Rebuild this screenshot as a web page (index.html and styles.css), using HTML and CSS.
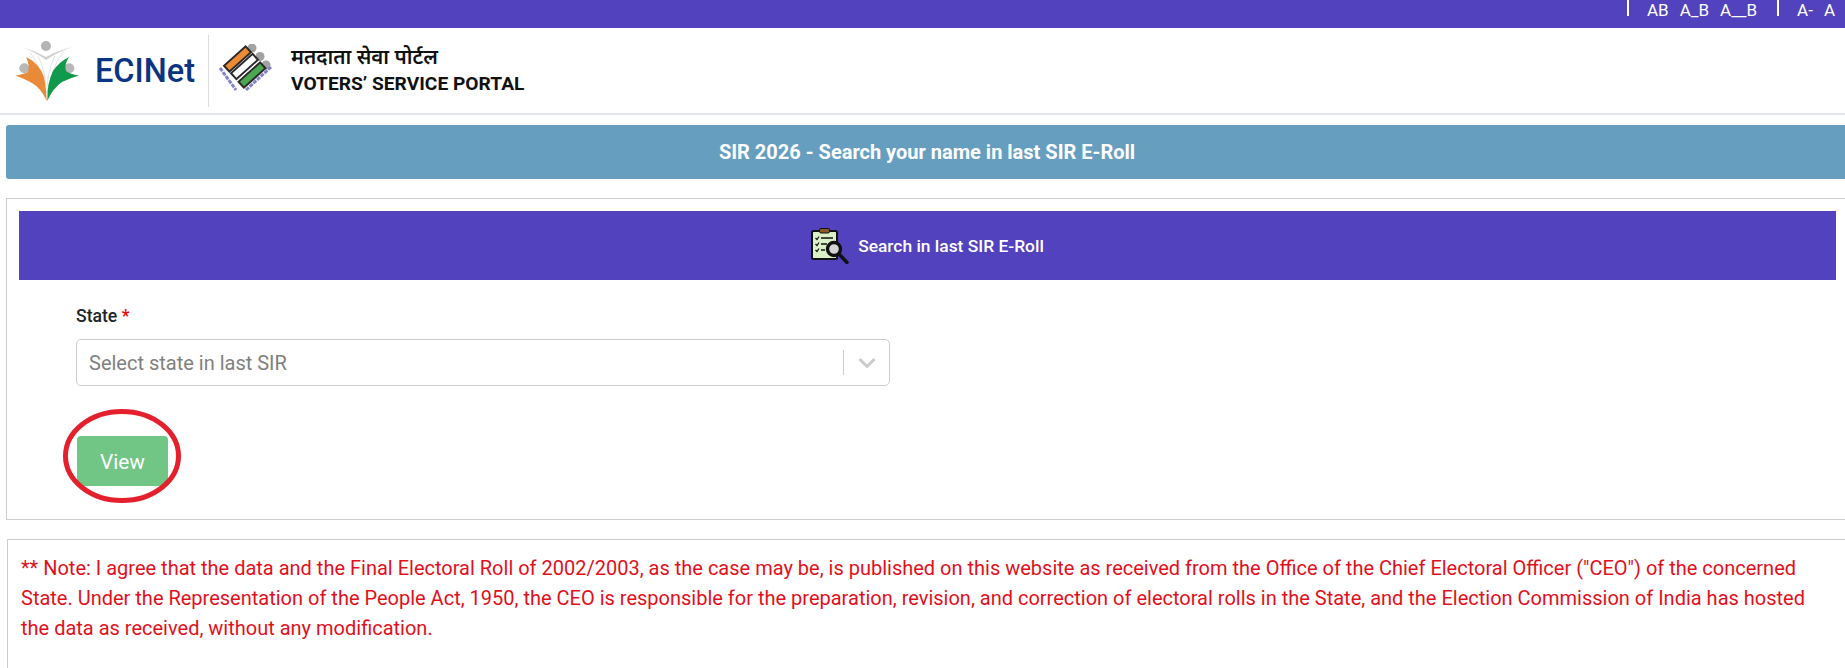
FILE: index.html
```html
<!DOCTYPE html>
<html lang="en">
<head>
<meta charset="utf-8">
<title>Voters' Service Portal</title>
<link rel="stylesheet" href="styles.css">
</head>
<body>
<div class="topbar">
  <span class="sep"></span>
  <span class="t">AB</span><span class="t t2">A_B</span><span class="t t2">A__B</span>
  <span class="sep sep2"></span>
  <span class="t">A-</span><span class="t t5">A</span>
</div>
<header class="header">
  <svg class="logo-eci" viewBox="0 0 64 60" width="64" height="60">
    <circle cx="31" cy="5" r="5" fill="#b4b4b4"/>
    <circle cx="9.300" cy="27.300" r="5" fill="#b8b8b8"/>
    <circle cx="54.300" cy="27.300" r="5" fill="#b8b8b8"/>
    <path d="M7 6 Q22 12 31 19 Q41 12 57 6 Q42 10 31 16 Q20 10 7 6Z" fill="#cfcfcf"/>
    <path d="M15 11 Q26 26 31 52 Q31 30 23 15" fill="none" stroke="#e4e4e4" stroke-width="1"/>
    <path d="M48 11 Q37 26 32 52 Q32 30 40 15" fill="none" stroke="#e4e4e4" stroke-width="1"/>
    <path d="M0.500 34.500 Q9 33 13 31 Q15 24 11 16 Q24 22 29 36 Q31 46 31.700 60 Q26 47 17 42 Q10 38 0.500 34.500Z" fill="#e88a37"/>
    <path d="M64 34.500 Q55 37 47 41 Q38 47 32.300 60 Q32 42 38 30 Q44 21 54 16 Q49 24 51 30 Q55 33 64 34.500Z" fill="#119a4b"/>
  </svg>
  <span class="eci-name">ECINet</span>
  <span class="divider"></span>
  <svg class="logo-vsp" viewBox="0 0 54 54" width="54" height="54">
    <circle cx="33" cy="4" r="4.500" fill="#a2a2a2"/><circle cx="41" cy="12.500" r="4.500" fill="#a2a2a2"/><circle cx="47" cy="21" r="4.500" fill="#a2a2a2"/>
    <g stroke="#2a2a2a" stroke-width="2">
      <rect x="4" y="11" width="29" height="8" fill="#ee8a34" transform="rotate(-42 18.500 15)"/>
      <rect x="11" y="18.500" width="29" height="8" fill="#fff" transform="rotate(-42 25.500 22.500)"/>
      <rect x="18.500" y="27" width="29" height="8" fill="#4aa752" transform="rotate(-42 33 31)"/>
    </g>
    <path d="M1 24 L17 46" stroke="#8386c6" stroke-width="3" stroke-dasharray="4 1"/>
    <path d="M27 46 L52 23" stroke="#8386c6" stroke-width="3" stroke-dasharray="4 1"/>
  </svg>
  <div class="portal">
    <div class="hi">मतदाता सेवा पोर्टल</div>
    <div class="en">VOTERS’ SERVICE PORTAL</div>
  </div>
</header>
<div class="banner">SIR 2026 - Search your name in last SIR E-Roll</div>
<section class="card">
  <div class="card-head">
    <svg class="clip" viewBox="0 0 38 36" width="38" height="36">
      <rect x="1" y="3" width="25" height="28" rx="1.500" fill="#dcf0c8" stroke="#111" stroke-width="2"/>
      <rect x="8.500" y="0.500" width="10" height="4.500" rx="1.500" fill="#8a5a22" stroke="#111" stroke-width="1"/>
      <path d="M4.500 10l1.500 1.500 2-3M4.500 16l1.500 1.500 2-3M4.500 22l1.500 1.500 2-3" stroke="#111" fill="none" stroke-width="1.200"/>
      <path d="M10 10h12M10 16h6M10 22h4" stroke="#111" stroke-width="1.500"/>
      <path d="M28.500 26.500l7.500 8" stroke="#111" stroke-width="3.400" stroke-linecap="round"/>
      <circle cx="23" cy="21" r="6.500" fill="#d5d5d5" stroke="#111" stroke-width="3.400"/>
    </svg>
    <span>Search in last SIR E-Roll</span>
  </div>
  <div class="form">
    <label class="label">State <b>*</b></label>
    <div class="select">
      <span class="ph">Select state in last SIR</span>
      <span class="ind-sep"></span>
      <svg class="chev" viewBox="0 0 20 20" width="20" height="20"><path d="M2.500 6 L10 13.500 L17.500 6" fill="none" stroke="#ccc" stroke-width="3"/></svg>
    </div>
    <div class="btn-wrap">
      <button class="btn" type="button">View</button>
      <svg class="ring" viewBox="0 0 120 96" width="120" height="96"><ellipse cx="60" cy="48" rx="56.500" ry="44.500" fill="none" stroke="#e3202c" stroke-width="5"/></svg>
    </div>
  </div>
</section>
<section class="note">** Note: I agree that the data and the Final Electoral Roll of 2002/2003, as the case may be, is published on this website as received from the Office of the Chief Electoral Officer ("CEO") of the concerned State. Under the Representation of the People Act, 1950, the CEO is responsible for the preparation, revision, and correction of electoral rolls in the State, and the Election Commission of India has hosted the data as received, without any modification.</section>
</body>
</html>
```
FILE: styles.css
```css
html, body { margin: 0; padding: 0; height: 668px; overflow: hidden; background: #fff; }
body { font-family: Roboto, "Liberation Sans", sans-serif; width: 1845px; }
.topbar { height: 28px; background: #5242bd; color: #fff; display: flex; justify-content: flex-end; align-items: flex-start; font-size: 17px; line-height: 20px; padding-right: 10px; box-sizing: border-box; }
.t { display: block; }
.t2 { margin-left: 11px; }
.t5 { margin-left: 11px; }
.sep { width: 2px; height: 16px; background: #fff; margin-right: 18px; }
.sep2 { margin-left: 20px; }
.header { height: 85px; border-bottom: 2px solid #e4e6ee; display: flex; align-items: center; padding-left: 15px; }
.logo-eci { flex: none; }
.eci-name { font-size: 32.500px; font-weight: 500; color: #0b3580; margin-left: 16px; width: 100px; }
.divider { width: 1px; height: 72px; background: #ddd; margin-left: 13px; }
.logo-vsp { margin-left: 10px; flex: none; }
.portal { margin-left: 18px; padding-bottom: 2px; }
.hi { font-size: 20.500px; line-height: 26px; font-weight: 600; color: #111; font-family: "Noto Sans", "Noto Sans Devanagari", sans-serif; margin-bottom: 2px; }
.en { font-size: 19.200px; line-height: 26px; font-weight: 700; color: #111; }
.banner { margin: 10px 0 0 6px; width: 1842px; height: 54px; background: #669ebf; border-radius: 3px; color: #fff; font-weight: 700; font-size: 20px; display: flex; align-items: center; justify-content: center; }
.card { margin: 19px 0 0 6px; width: 1842px; height: 322px; box-sizing: border-box; border: 1px solid #ccc; padding: 12px; }
.card-head { width: 1817px; height: 69px; background: #5242bd; color: #fff; font-weight: 500; font-size: 17.400px; display: flex; align-items: center; justify-content: center; gap: 9px; }
.form { padding: 24px 0 0 57px; }
.label { display: block; font-size: 17.600px; line-height: 24px; font-weight: 500; color: #212529; }
.label b { color: #e00; font-weight: 500; }
.select { width: 814px; height: 47px; margin-top: 11px; box-sizing: border-box; border: 1px solid #ccc; border-radius: 5px; display: flex; align-items: center; padding-left: 12px; }
.ph { flex: 1; font-size: 20px; color: #808080; }
.ind-sep { width: 1px; height: 25px; background: #ccc; }
.chev { margin: 0 12px 0 13px; }
.btn-wrap { position: relative; width: 91px; margin-top: 50px; margin-left: 1px; }
.btn { display: block; width: 91px; height: 50px; border: 0; border-radius: 4px; background: #71c585; color: #fff; font: 400 20.800px Roboto, sans-serif; padding: 2px 0 0; }
.ring { position: absolute; left: -15px; top: -28px; }
.note { margin: 19px 0 0 7px; width: 1842px; height: 130px; box-sizing: border-box; border: 1px solid #ccc; border-bottom: 0; padding: 13px 13px 0; color: #e2101c; font-size: 20px; line-height: 30px; }
```
